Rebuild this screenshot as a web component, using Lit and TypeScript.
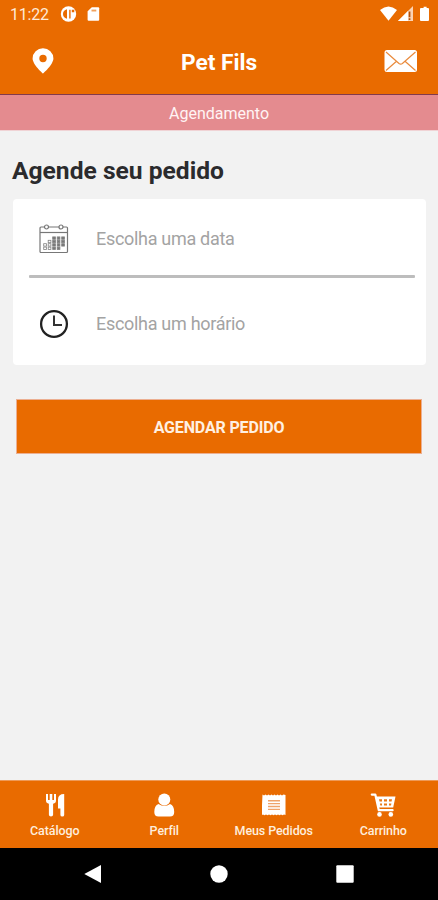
import { LitElement, html, css, svg } from "lit";
import { customElement } from "lit/decorators.js";

const days: Array<[number, number]> = [];
for (let r = 0; r < 4; r++) {
  for (let c = 0; c < 5; c++) {
    if (r < 2 && c < 2 - r) continue;
    if (r === 3 && c > 3) continue;
    days.push([c, r]);
  }
}

@customElement("app-root")
export class AppRoot extends LitElement {
  static styles = css`
    :host {
      display: flex;
      flex-direction: column;
      width: 438px;
      height: 900px;
      overflow: hidden;
      background: #f2f2f2;
      font-family: Roboto, "Liberation Sans", sans-serif;
      color: #fff;
    }
    svg { display: block; flex: none; }
    .status {
      height: 28px;
      background: #e96b00;
      display: flex;
      align-items: center;
      padding: 0 8px 0 10px;
      box-sizing: border-box;
      color: #ffe9d6;
    }
    .time { font-size: 16px; line-height: 28px; width: 50px; padding-top: 2px; letter-spacing: -0.2px; }
    .grow { flex: 1; }
    .header {
      height: 67px;
      box-sizing: border-box;
      background: #e96b00;
      border-bottom: 1px solid #823a4c;
      display: grid;
      grid-template-columns: 85px 1fr 75px;
      align-items: center;
      justify-items: center;
    }
    .title { font-size: 22.7px; font-weight: 700; line-height: 28px; padding: 4px 10px 0 0; }
    .crumb {
      height: 36px;
      background: #e48b8f;
      border-bottom: 1px solid #f0d3d5;
      box-sizing: border-box;
      text-align: center;
      font-size: 16px;
      line-height: 38px;
      color: #fff4f4;
    }
    .main { flex: 1; padding: 0 12px; }
    h1 { margin: 23px 0 0; font-size: 24.6px; line-height: 34px; font-weight: 700; color: #2b2b2d; white-space: nowrap; }
    .card {
      margin: 11px 0 0 1px;
      width: 413px;
      height: 166px;
      box-sizing: border-box;
      background: #fff;
      border-radius: 4px;
      padding: 0 11px 0 16px;
      display: flex;
      flex-direction: column;
    }
    .field { display: flex; align-items: center; font-size: 18px; letter-spacing: -0.3px; color: #a3a3a3; }
    .field svg { margin: 0 27px 0 10px; }
    .date { height: 76px; padding-top: 5px; box-sizing: border-box; }
    .hour { height: 88px; padding-top: 6px; box-sizing: border-box; }
    .field span { margin-top: -2px; }
    .rule { height: 3px; background: #bdbdbd; border-radius: 1px; flex: none; }
    .btn {
      display: block;
      width: 406px;
      height: 55px;
      margin: 34px 0 0 4px;
      padding: 2px 0 0;
      border: 1px solid #ecaf91;
      background: #e96b00;
      color: #fff0e2;
      font: 700 16px Roboto, "Liberation Sans", sans-serif;
      letter-spacing: -0.15px;
    }
    .tabs {
      height: 68px;
      box-sizing: border-box;
      background: #e96b00;
      border-top: 1px solid #ee9a58;
      display: grid;
      grid-template-columns: repeat(4, 1fr);
    }
    .tab { display: flex; flex-direction: column; align-items: center; padding-top: 11px; font-size: 12.5px; font-weight: 500; letter-spacing: -0.1px; line-height: 16px; color: #ffeedd; }
    .tab svg { margin-bottom: 5px; }
    .nav { height: 52px; background: #000; display: flex; justify-content: center; align-items: center; gap: 108px; }
  `;

  render() {
    return html`
      <div class="status">
        <span class="time">11:22</span>
        <svg width="40" height="16" viewBox="0 0 40 16">
          <circle cx="8.500" cy="8" r="7.700" fill="#fff" />
          <path d="M7 3.300Q3 4.300 3 8t4 4.800zM9.200 3.800h1.400v8.600H9.200zM11.800 3.700h2.500v2.600h-2.500z" fill="#e96b00" />
          <path d="M31.800 1.200h6.400q1 0 1 1v11.600q0 1-1 1h-9.600q-1 0-1-1V5.300z" fill="#fff" />
          <path d="M31.500 3.600h4.800v1.900h-4.800z" fill="#f0a25f" />
        </svg>
        <span class="grow"></span>
        <svg width="50" height="16" viewBox="0 0 50 16">
          <path d="M0 4Q8.500-3 17 4L8.500 14.800z" fill="#fff" />
          <path d="M18 15L33 0v15z" fill="#fbd3b4" />
          <path d="M18 15l10-10v10z" fill="#fff" />
          <path d="M28.700 5.600h1.700v5.600h-1.700zM28.700 12.200h1.700v1.800h-1.700z" fill="#b5500a" />
          <path d="M41.300 2h2.300V.7h3V2H48q1 0 1 1v11q0 1-1 1h-7q-1 0-1-1V3q0-1 1-1z" fill="#fff" />
        </svg>
      </div>
      <div class="header">
        <svg width="22" height="26" viewBox="0 0 22 26">
          <path fill-rule="evenodd" d="M11 .3A10.400 10.200 0 0 0 .6 10.500C.6 16.500 11 25.600 11 25.600S21.400 16.500 21.400 10.500A10.400 10.200 0 0 0 11 .3zM11 6.800a3.700 3.700 0 1 1 0 7.400 3.700 3.700 0 0 1 0-7.400z" fill="#fff" />
        </svg>
        <div class="title">Pet Fils</div>
        <svg width="34" height="24" viewBox="0 0 34 24">
          <rect x=".5" y="1" width="32.500" height="22" rx="2.500" fill="#fff" />
          <path d="M2 3l13 11.500q1.700 1.300 3.400 0L31.500 3M2 21.500l10.500-9.300M31.500 21.500L21 12.200" fill="none" stroke="#e98a3c" stroke-width="1.200" />
        </svg>
      </div>
      <div class="crumb">Agendamento</div>
      <div class="main">
        <h1>Agende seu pedido</h1>
        <div class="card">
          <div class="field date">
            <svg width="30" height="30" viewBox="0 0 30 30">
              <g fill="none" stroke="#777" stroke-width="1.200">
                <rect x="1" y="3" width="27.500" height="25.500" rx="1" />
                <path d="M1 8.500h27.500" />
                <circle cx="7.500" cy="3" r="2" fill="#fff" />
                <circle cx="22" cy="3" r="2" fill="#fff" />
              </g>
              ${days.map(([c, r]) => svg`<rect x=${4.7 + c * 4.5} y=${12.9 + r * 3.4} width="2.7" height="2.4" fill=${c < 2 ? "#fff" : "#777"} stroke="#808080" stroke-width=".8" />`)}
            </svg>
            <span>Escolha uma data</span>
          </div>
          <div class="rule"></div>
          <div class="field hour">
            <svg width="30" height="30" viewBox="0 0 30 30">
              <circle cx="15" cy="15" r="12.900" fill="none" stroke="#222" stroke-width="2.300" />
              <path d="M15 6.500v9.500h8" fill="none" stroke="#333" stroke-width="2" />
            </svg>
            <span>Escolha um horário</span>
          </div>
        </div>
        <button class="btn">AGENDAR PEDIDO</button>
      </div>
      <div class="tabs">
        <div class="tab">
          <svg width="24" height="26" viewBox="0 0 24 26">
            <path d="M3 2v6.500q0 2.700 2.900 3.300v11q0 1.700 2.100 1.700t2.100-1.700v-11q2.900-.6 2.900-3.300V2h-2v6H9.300V2H6.700v6H5V2zM21.200 2v21q0 1.500-1.900 1.500t-1.900-1.500v-6.500h-2.400V7.500q0-5.500 6.200-5.500z" fill="#fff" />
          </svg>
          Catálogo
        </div>
        <div class="tab">
          <svg width="24" height="26" viewBox="0 0 24 26">
            <path d="M6.500 12Q2.300 13.500 2.300 20q0 4.500 4.200 4.500h11.500q4.200 0 4.200-4.500 0-6.500-4.200-8-5.500 3.700-11.500 0z" fill="#fff" />
            <circle cx="12.300" cy="7.500" r="6" fill="#fff" />
          </svg>
          Perfil
        </div>
        <div class="tab">
          <svg width="24" height="26" viewBox="0 0 24 26">
            <path d="M.5 2.600l1.500.8 1.500-.8 1.500.8 1.500-.8 1.500.8 1.500-.8 1.500.8 1.500-.8 1.500.8 1.500-.8 1.500.8 1.500-.8 1.500.8 1.500-.8 2 .5V23l-1.500-.5-1.500.8-1.500-.8-1.500.8-1.500-.8-1.500.8-1.500-.8-1.500.8-1.500-.8-1.500.8-1.500-.8-1.500.8-1.500-.8-1.500.8-1.500-.8-1.500.8z" fill="#fff" />
            <path d="M6 8.700h12M6 11.600h12M6 14.500h12M6 17.400h12" stroke="#efa36b" stroke-width="1.400" />
          </svg>
          Meus Pedidos
        </div>
        <div class="tab">
          <svg width="26" height="26" viewBox="0 0 26 26">
            <path d="M1.800 2.600h3.500l3.500 15.600h13.800" fill="none" stroke="#fff" stroke-width="2.200" stroke-linecap="round" stroke-linejoin="round" />
            <path d="M5.500 4.600H25.500l-2.300 11H8z" fill="#fff" />
            <path d="M9 7.300h3v2.300H9.500zM14 7.300h3v2.300h-3zM19 7.300h3l-.4 2.300H19zM9.900 11.400H12v2.200h-1.700zM14 11.400h3v2.200h-3zM19 11.400h2.400l-.4 2.200h-2z" fill="#e97a1a" />
            <circle cx="9.500" cy="22.400" r="2.300" fill="#fff" />
            <circle cx="20.800" cy="22.400" r="2.300" fill="#fff" />
          </svg>
          Carrinho
        </div>
      </div>
      <div class="nav">
        <svg width="18" height="20" viewBox="0 0 18 20"><path d="M.3 10L17 1v18z" fill="#fff" /></svg>
        <svg width="18" height="18" viewBox="0 0 18 18"><circle cx="9" cy="9" r="8.700" fill="#fff" /></svg>
        <svg width="18" height="18" viewBox="0 0 18 18"><rect x=".3" y=".3" width="17.400" height="17.400" rx="1" fill="#fff" /></svg>
      </div>
    `;
  }
}
